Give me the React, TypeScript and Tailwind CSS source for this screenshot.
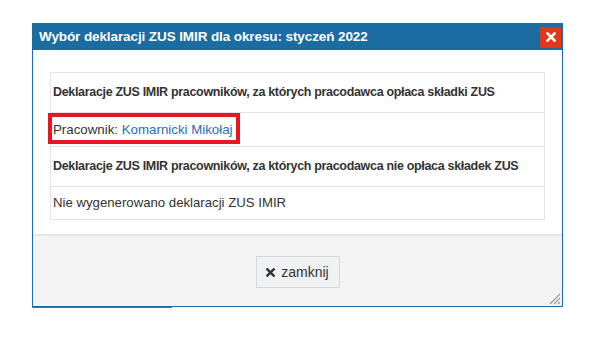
import React from "react";

const rows = [
  { text: "Deklaracje ZUS IMIR pracowników, za których pracodawca opłaca składki ZUS", head: true, h: "h-[40px]" },
  { text: "", employee: "Komarnicki Mikołaj", h: "h-[34px]" },
  { text: "Deklaracje ZUS IMIR pracowników, za których pracodawca nie opłaca składek ZUS", head: true, h: "h-[40px]" },
  { text: "Nie wygenerowano deklaracji ZUS IMIR", h: "h-[33px]" },
];

function CloseIcon({ className }: { className?: string }) {
  return (
    <svg viewBox="0 0 10 10" className={className}>
      <path d="M1.5 1.5 L8.5 8.5 M8.5 1.5 L1.5 8.5" stroke="currentColor" strokeWidth="2.6" strokeLinecap="square" />
    </svg>
  );
}

export default function App() {
  return (
    <div
      className="w-[611px] h-[341px] bg-white overflow-hidden pt-[23px] pl-[32px]"
      style={{ fontFamily: '"Liberation Sans", Arial, sans-serif' }}
    >
      <div className="w-[531px] border border-[#1b6ca8] bg-white relative">
        {/* Title bar */}
        <div className="h-[26px] bg-[#1b6ca0] flex items-center justify-between pl-[6px] pr-[1px]">
          <span className="text-white font-bold text-[13.5px] tracking-[-0.1px]">
            Wybór deklaracji ZUS IMIR dla okresu: styczeń 2022
          </span>
          <button className="w-[21px] h-[21px] bg-[#e2371d] flex items-center justify-center">
            <CloseIcon className="w-[10px] h-[10px] text-white" />
          </button>
        </div>

        {/* Body */}
        <div className="pt-[22px] pb-[14px] px-[17px]">
          <div className="border-x border-b border-[#e1e3e6]">
            {rows.map((row, i) => (
              <div
                key={i}
                className={`relative flex items-center pl-[2px] border-t border-[#e1e3e6] ${row.h}`}
              >
                {row.employee ? (
                  <span className="text-[13.3px] text-[#333]">
                    Pracownik: <span className="text-[#2a6fae]">{row.employee}</span>
                  </span>
                ) : (
                  <span
                    className={
                      row.head
                        ? "text-[12.5px] text-[#333] font-bold tracking-[-0.32px]"
                        : "text-[13.2px] text-[#333]"
                    }
                  >
                    {row.text}
                  </span>
                )}
                {row.employee && (
                  <div className="absolute left-[-3px] top-[0px] w-[192px] h-[31px] border-[4px] border-[#e8161f]" />
                )}
              </div>
            ))}
          </div>
        </div>

        {/* Footer */}
        <div className="border-t-[2px] border-[#e6e6e6] bg-[#f3f3f3] h-[72px] flex items-start justify-center pt-[20px] relative">
          <button className="w-[84px] h-[32px] border border-[#d5d6d8] bg-[#f0f1f3] flex items-center justify-center gap-[6px] text-[14px] text-[#333]">
            <CloseIcon className="w-[9px] h-[9px] text-[#333]" />
            zamknij
          </button>
          <svg className="absolute right-[1px] bottom-[1px] w-[14px] h-[14px]" viewBox="0 0 14 14">
            <path d="M13 3 L3 13 M13 7 L7 13 M13 11 L11 13" stroke="#9a9a9a" strokeWidth="1.2" />
          </svg>
        </div>
      </div>
      <div className="w-[140px] h-[1px] bg-[#2e8a5a]" />
    </div>
  );
}
